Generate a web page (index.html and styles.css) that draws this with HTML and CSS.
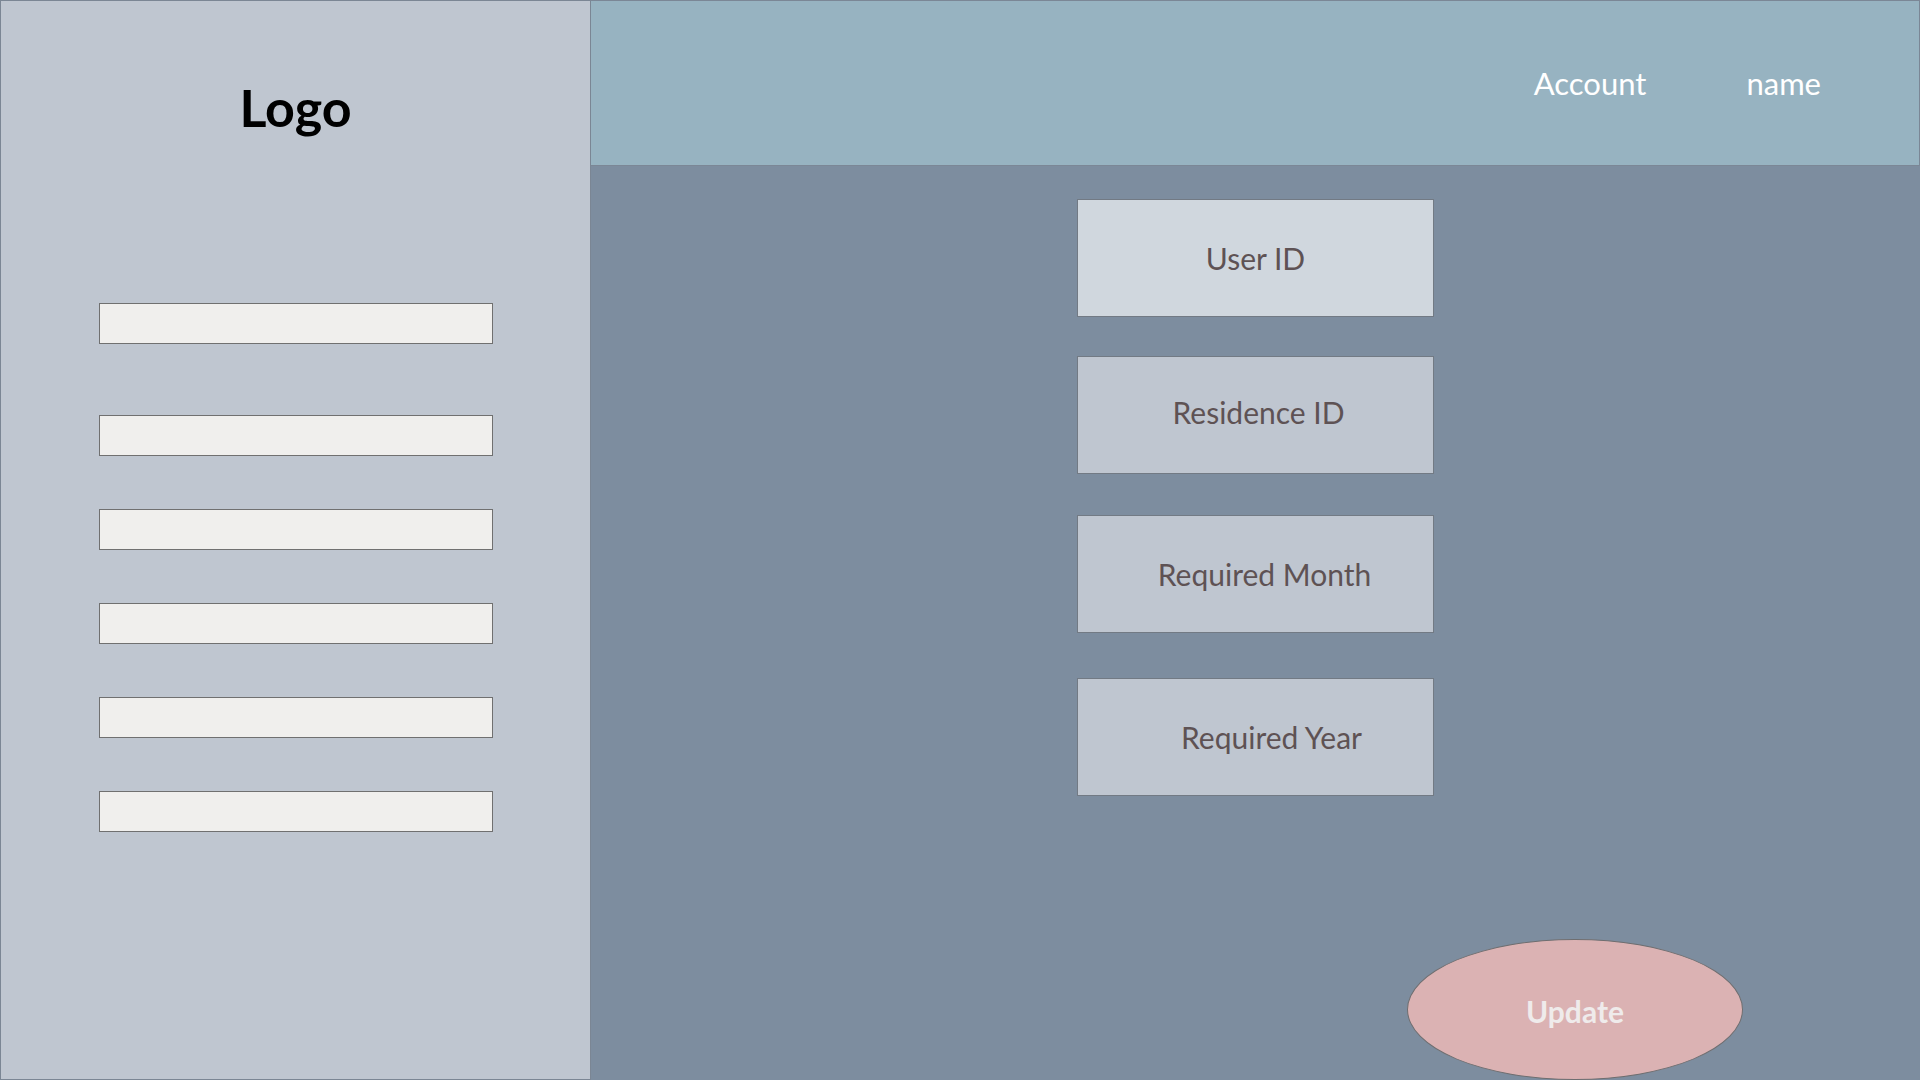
FILE: index.html
```html
<!DOCTYPE html>
<html lang="en">
<head>
<meta charset="utf-8">
<title>Dashboard</title>
<link rel="stylesheet" href="styles.css">
</head>
<body>
<div class="app">
  <aside class="sidebar">
    <div class="logo">Logo</div>
    <nav class="nav">
      <div class="nav-item nav-item--first"></div>
      <div class="nav-item"></div>
      <div class="nav-item"></div>
      <div class="nav-item"></div>
      <div class="nav-item"></div>
      <div class="nav-item"></div>
    </nav>
  </aside>
  <div class="content">
    <header class="topbar">
      <span class="topbar-link">Account</span>
      <span class="topbar-link">name</span>
    </header>
    <main class="main">
      <div class="fields">
        <div class="field field--active">User ID</div>
        <div class="field field--2">Residence ID</div>
        <div class="field field--3">Required Month</div>
        <div class="field field--4">Required Year</div>
      </div>
      <div class="actions">
        <button class="update">Update</button>
      </div>
    </main>
  </div>
</div>
</body>
</html>
```
FILE: styles.css
```css
* { box-sizing: border-box; }
html, body { margin: 0; padding: 0; }
body {
  width: 1920px;
  height: 1080px;
  overflow: hidden;
  font-family: Lato, "Open Sans", "Noto Sans", sans-serif;
}
.app {
  display: flex;
  width: 1920px;
  height: 1080px;
}
.sidebar {
  width: 591px;
  flex: none;
  height: 100%;
  background: #bfc6d0;
  border: 1px solid #7b8694;
  display: flex;
  flex-direction: column;
}
.logo {
  margin-top: 72px;
  height: 68px;
  line-height: 68px;
  font-size: 52px;
  font-weight: 700;
  color: #000;
  text-align: center;
}
.nav {
  margin-top: 162px;
  margin-left: 98px;
  display: flex;
  flex-direction: column;
}
.nav-item {
  width: 394px;
  height: 41px;
  background: #f0efed;
  border: 1px solid #707070;
  margin-top: 53px;
}
.nav-item--first { margin-top: 0; margin-bottom: 18px; }
.content {
  flex: 1;
  display: flex;
  flex-direction: column;
  height: 100%;
}
.topbar {
  height: 166px;
  flex: none;
  background: #97b3c1;
  border: 1px solid #7b8796;
  border-left: none;
  display: flex;
  align-items: center;
  justify-content: flex-end;
  gap: 100px;
  padding-right: 98px;
}
.topbar-link {
  color: #ffffff;
  font-size: 31px;
  font-weight: 400;
}
.main {
  flex: 1;
  background: #7d8d9f;
  display: flex;
  flex-direction: column;
  align-items: center;
  padding-top: 33px;
}
.fields {
  display: flex;
  flex-direction: column;
  align-items: center;
}
.field {
  width: 357px;
  height: 118px;
  background: #bfc6d0;
  border: 1px solid #727a84;
  color: #5e5254;
  font-size: 30px;
  display: flex;
  align-items: center;
  justify-content: center;
}
.field--active { background: #d0d7de; }
.field--2 { margin-top: 39px; padding-left: 6px; padding-bottom: 6px; }
.field--3 { margin-top: 41px; padding-left: 18px; }
.field--4 { margin-top: 45px; padding-left: 32px; }
.actions {
  margin-top: auto;
  align-self: stretch;
  display: flex;
  justify-content: flex-end;
  padding-right: 177px;
}
.update {
  width: 336px;
  height: 141px;
  border-radius: 50%;
  background: #dbb2b3;
  border: 1px solid #6e6e70;
  color: #efebeb;
  font-family: Lato, "Open Sans", sans-serif;
  font-size: 30px;
  font-weight: 700;
  padding: 0;
  padding-top: 2px;
  margin-bottom: 0;
}
```
